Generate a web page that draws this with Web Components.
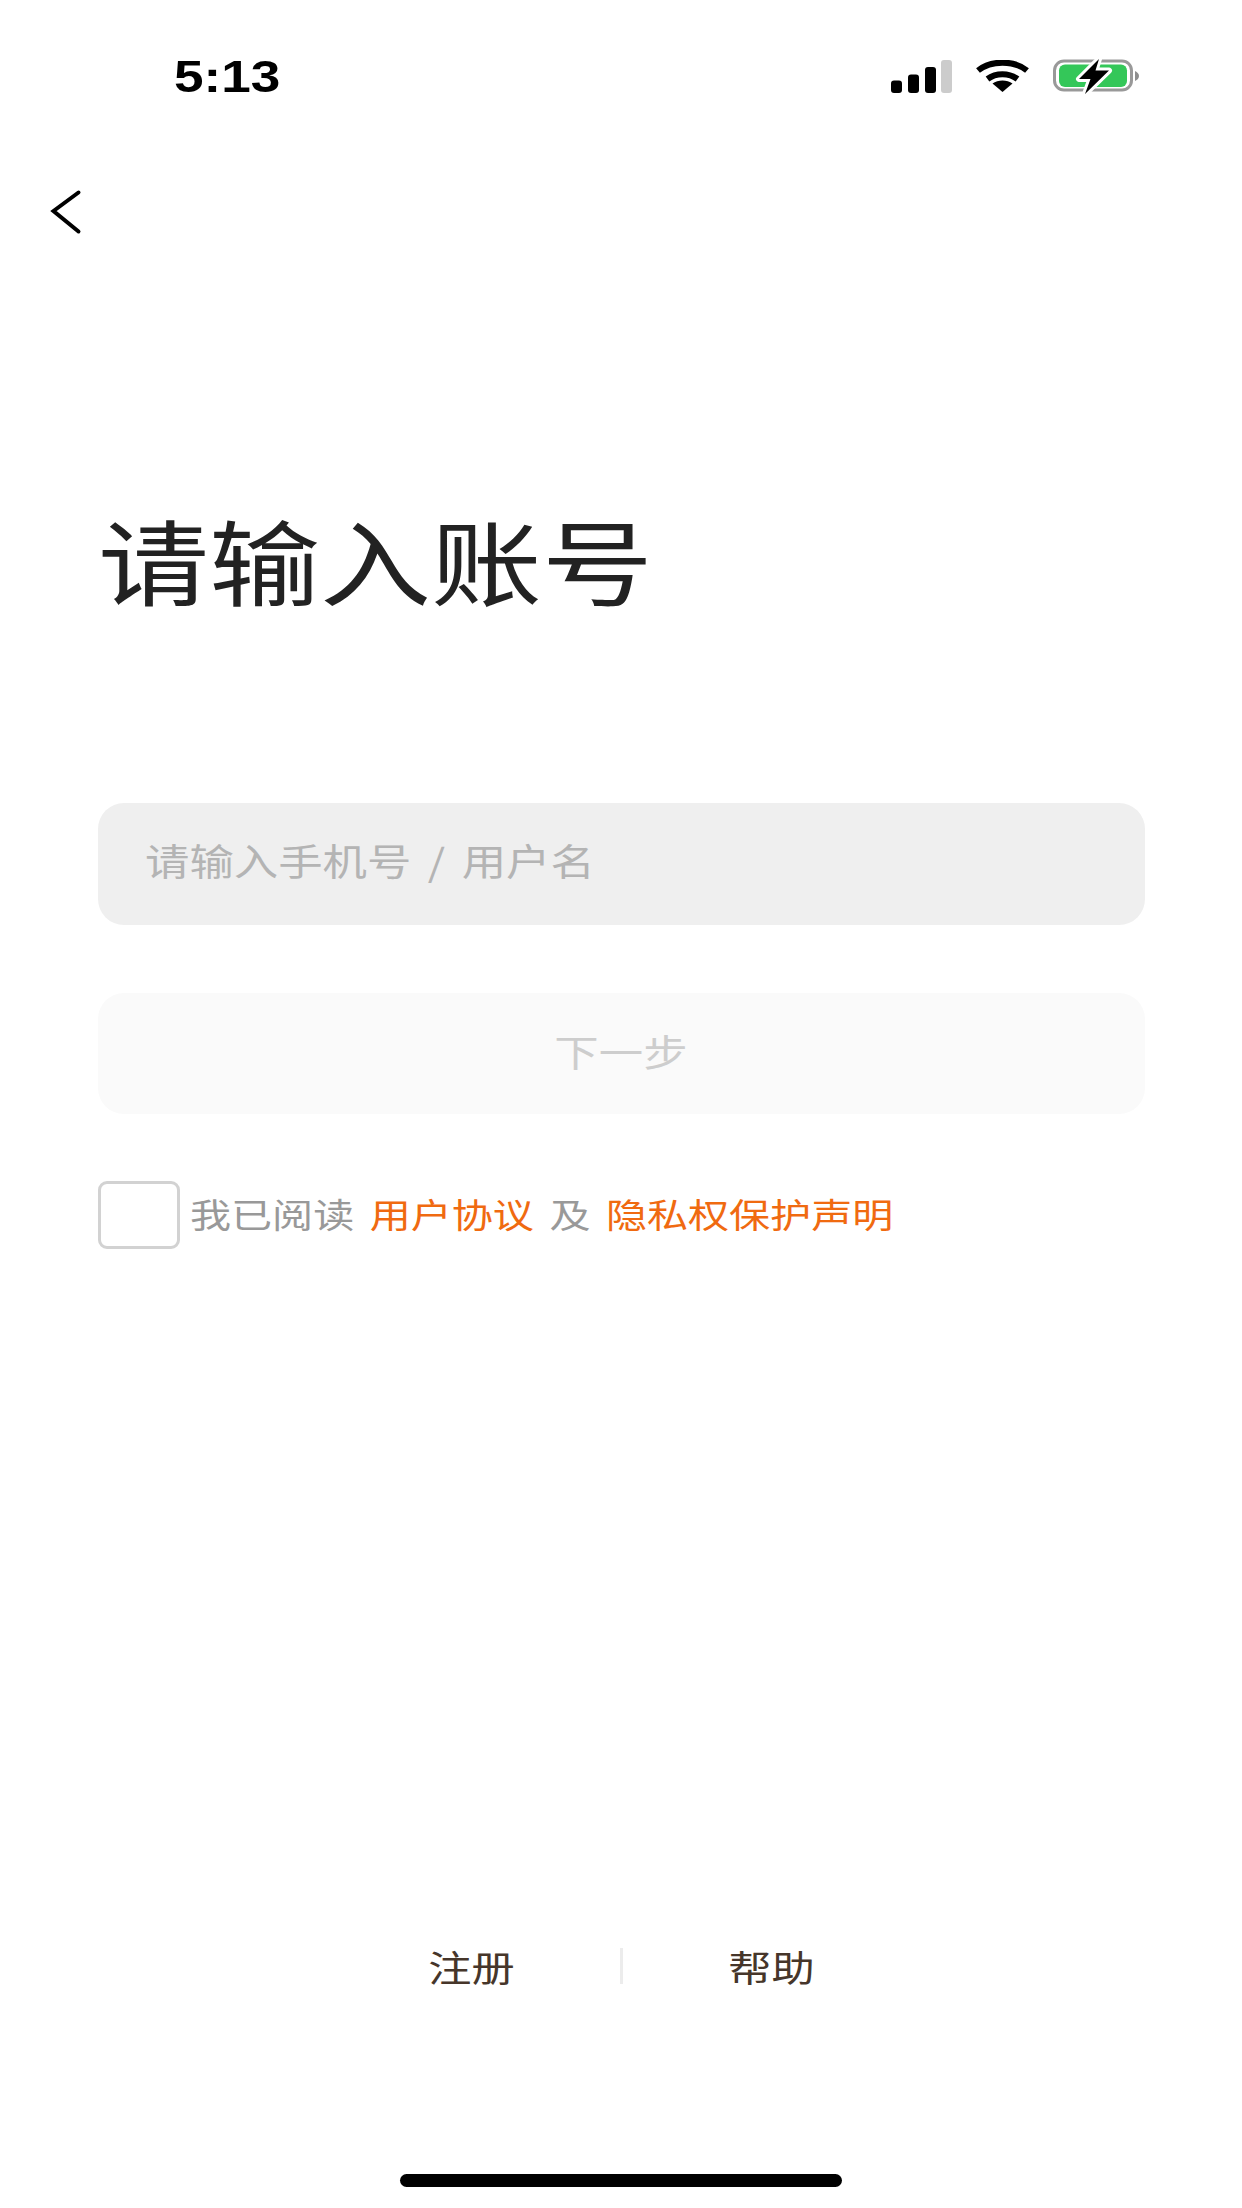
<!DOCTYPE html>
<html lang="zh-CN">
<head>
<meta charset="utf-8">
<title>请输入账号</title>
<style>
  html, body { margin: 0; height: 100%; background: #fff; }
  body { font-family: "Noto Sans CJK SC", "Noto Sans", sans-serif; overflow: hidden; }
  login-page { height: 2208px; }
</style>
</head>
<body>
<login-page>
  <status-bar time="5:13"></status-bar>
  <back-button></back-button>
  <login-title>请输入账号</login-title>
  <text-field placeholder="请输入手机号 / 用户名"></text-field>
  <next-button>下一步</next-button>
  <agree-row></agree-row>
  <footer-links></footer-links>
  <home-bar></home-bar>
</login-page>
<script>
(function() {
  'use strict';

  // the reference is a phone shot stretched wider than it is tall, text needs the same
  const STRETCH = 1.19;

  function define(name, html) {
    customElements.define(name, class extends HTMLElement {
      constructor() {
        super();
        this.attachShadow({mode: 'open'});
      }
      connectedCallback() {
        this.shadowRoot.innerHTML = html(this);
      }
    });
  }

  define('login-page', () => `
    <style>
      :host { display: flex; flex-direction: column; box-sizing: border-box; width: 1242px; background: #fff; }
    </style>
    <slot></slot>`);

  define('status-bar', el => `
    <style>
      :host { display: flex; align-items: center; box-sizing: border-box; height: 152px; padding: 0 103px 0 174px; justify-content: space-between; }
      .time { font: 700 45px/1 "Liberation Sans", Arial, sans-serif; color: #000; transform: scaleX(1.18); transform-origin: left center; }
      .icons { display: flex; align-items: center; gap: 24px; }
      svg { display: block; }
    </style>
    <span class="time">${el.getAttribute('time')}</span>
    <div class="icons">
      <svg width="61" height="33" viewBox="0 0 61 33">
        <rect x="0" y="20.5" width="11" height="12.5" rx="3" fill="#000"/>
        <rect x="17" y="14.5" width="11" height="18.5" rx="3" fill="#000"/>
        <rect x="34" y="7" width="11" height="26" rx="3" fill="#000"/>
        <rect x="50" y="0" width="11" height="33" rx="3" fill="#ccc"/>
      </svg>
      <svg width="53" height="32" viewBox="0 0 53 32">
        <path d="M2 10.5C15 0 38 0 51 10.5" fill="none" stroke="#000" stroke-width="6"/>
        <path d="M11.5 19C20 12.5 33 12.5 41.5 19" fill="none" stroke="#000" stroke-width="6"/>
        <path d="M16.5 23.5C22 19.5 31 19.5 36.5 23.5L26.5 32Z" fill="#000"/>
      </svg>
      <svg width="86" height="37" viewBox="0 0 86 37">
        <rect x="1.5" y="3" width="77" height="29" rx="9.5" fill="none" stroke="#999" stroke-width="3"/>
        <rect x="6" y="6.5" width="68" height="22.5" rx="6" fill="#34c759"/>
        <path d="M82 13C84.5 14 86 16 86 18C86 20 84.5 22 82 23Z" fill="#8e8e8e"/>
        <path d="M46 1L26 21H37.5L32 36L56 12.5H42.5Z" fill="#000" stroke="#fff" stroke-width="6" stroke-linejoin="round" paint-order="stroke"/>
      </svg>
    </div>`);

  define('back-button', () => `
    <style>
      :host { display: block; box-sizing: border-box; height: 100px; padding: 37px 0 0 50px; }
      svg { display: block; }
    </style>
    <svg width="32" height="46" viewBox="0 0 32 46">
      <path d="M28.5 3.5L3.5 22L28.5 42.5" fill="none" stroke="#000" stroke-width="4" stroke-linecap="round" stroke-linejoin="miter"/>
    </svg>`);

  define('login-title', () => `
    <style>
      :host { display: block; margin: 242px 0 0 98px; height: 136px; }
      div { width: fit-content; font-size: 93.3px; line-height: 130px; color: #222; white-space: nowrap; transform: scaleX(${STRETCH}); transform-origin: left center; }
    </style>
    <div><slot></slot></div>`);

  define('text-field', el => `
    <style>
      :host { display: flex; align-items: center; box-sizing: border-box; margin: 173px 97px 0 98px; height: 122px; padding: 0 48px 6px 47px; background: #efefef; border-radius: 26px; }
      span { font-size: 37.3px; line-height: 1; color: #b4b4b4; white-space: pre; word-spacing: 5.5px; transform: scaleX(${STRETCH}); transform-origin: left center; }
    </style>
    <span>${el.getAttribute('placeholder')}</span>`);

  define('next-button', () => `
    <style>
      :host { display: flex; align-items: center; justify-content: center; box-sizing: border-box; margin: 68px 97px 0 98px; height: 121px; padding: 0 2px 3px 0; background: #fafafa; border-radius: 26px; }
      span { font-size: 37.3px; line-height: 1; color: #cdcdcd; transform: scaleX(${STRETCH}); }
    </style>
    <span><slot></slot></span>`);

  define('agree-row', () => `
    <style>
      :host { display: flex; align-items: center; margin: 67px 97px 0 98px; height: 68px; }
      .box { box-sizing: border-box; width: 82px; height: 68px; border: 3px solid #d2d2d2; border-radius: 9px; background: #fff; flex: none; }
      .text { margin: -3px 0 0 10px; font-size: 34.5px; line-height: 1; color: #999; white-space: nowrap; transform: scaleX(${STRETCH}); transform-origin: left center; }
      a { color: #f06a10; text-decoration: none; }
      i { display: inline-block; width: 13px; }
    </style>
    <div class="box"></div>
    <div class="text">我已阅读<i></i><a>用户协议</a><i></i>及<i></i><a>隐私权保护声明</a></div>`);

  define('footer-links', () => `
    <style>
      :host { display: flex; justify-content: center; align-items: center; margin-top: 699px; height: 36px; font-size: 36.3px; color: #46362a; }
      span { display: block; width: 297px; text-align: center; line-height: 36px; transform: scaleX(${STRETCH}); }
      i { display: block; width: 3px; height: 36px; background: #ececec; flex: none; }
    </style>
    <span>注册</span><i></i><span>帮助</span>`);

  define('home-bar', () => `
    <style>
      :host { display: block; margin: 190px auto 0; width: 442px; height: 13px; border-radius: 7px; background: #000; }
    </style>`);
}());
</script>
</body>
</html>
